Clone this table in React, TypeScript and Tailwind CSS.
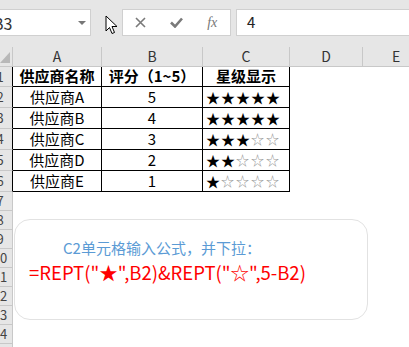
import React from "react";

type Row = { no: number; name: string; score: string; stars: string };

const rows: Row[] = [
  { no: 2, name: "供应商A", score: "5", stars: "★★★★★" },
  { no: 3, name: "供应商B", score: "4", stars: "★★★★★" },
  { no: 4, name: "供应商C", score: "3", stars: "★★★☆☆" },
  { no: 5, name: "供应商D", score: "2", stars: "★★☆☆☆" },
  { no: 6, name: "供应商E", score: "1", stars: "★☆☆☆☆" },
];

const emptyRows = [7, 8, 9, 10, 11, 12, 13, 14, 15];

function RowHead({ n, dark }: { n: number; dark?: boolean }) {
  return (
    <div
      className={
        "w-[13px] shrink-0 overflow-hidden bg-[#e6e6e6] border-b border-b-[#c8c8c8] border-r " +
        (dark ? "border-r-black" : "border-r-[#c8c8c8]")
      }
    >
      <div className="ml-[-13px] w-[26px] h-full flex items-center justify-center text-[13px] text-[#444]">
        {n}
      </div>
    </div>
  );
}

function Stars({ value }: { value: string }) {
  return (
    <div className="flex pl-[3px] gap-[3px]">
      {value.split("").map((s, i) => (
        <span
          key={i}
          className={
            "w-[12px] text-center leading-none " +
            (s === "★" ? "text-[14px] text-black" : "text-[13px] text-[#9a9a9a]")
          }
        >
          {s}
        </span>
      ))}
    </div>
  );
}

export default function App() {
  return (
    <div className="relative w-[409px] h-[347px] overflow-hidden bg-white font-['Noto_Sans_CJK_SC','Microsoft_YaHei',sans-serif] text-black">
      {/* formula bar */}
      <div className="h-[47px] bg-[#e6e6e6] flex items-start pt-[9px]">
        <div className="w-[91px] h-[27px] bg-white border border-[#d0d0d0] border-l-0 flex items-center overflow-hidden relative">
          <span className="ml-[-7px] text-[16px] text-[#333]">B3</span>
          <svg className="absolute left-[78px] top-[11px]" width="8" height="5" viewBox="0 0 8 5">
            <polygon points="0,0 8,0 4,4" fill="#777" />
          </svg>
        </div>
        <div className="w-[31px] flex justify-start pl-[14px] pt-[6px]">
          <svg width="13" height="20" viewBox="0 0 13 20">
            <path
              d="M1 1 L1 16 L4.5 12.5 L7 18.5 L9.5 17.5 L7 11.5 L12 11.5 Z"
              fill="white"
              stroke="black"
              strokeWidth="1"
              strokeLinejoin="round"
            />
          </svg>
        </div>
        <div className="w-[109px] h-[27px] bg-white border border-[#d0d0d0] flex items-center">
          <div className="w-[36px] flex justify-center">
            <svg width="11" height="11" viewBox="0 0 11 11">
              <path d="M1 1 L10 10 M10 1 L1 10" stroke="#7a7a7a" strokeWidth="1.6" />
            </svg>
          </div>
          <div className="w-[36px] flex justify-center">
            <svg width="13" height="11" viewBox="0 0 13 11">
              <path d="M1 5.5 L5 9.5 L12 1.5" stroke="#7a7a7a" strokeWidth="2.6" fill="none" />
            </svg>
          </div>
          <div className="w-[36px] flex justify-center">
            <span className="font-['Liberation_Serif',serif] italic text-[14px] text-[#777] leading-none">
              fx
            </span>
          </div>
        </div>
        <div className="ml-[5px] flex-1 h-[27px] bg-white border border-r-0 border-[#d0d0d0] flex items-center pl-[10px]">
          <span className="text-[15px] text-[#222]">4</span>
        </div>
      </div>

      {/* column headers */}
      <div className="flex h-[20px] bg-[#e6e6e6] border-b border-[#c8c8c8] text-[14px] text-[#333]">
        <div className="w-[13px] shrink-0 border-r border-[#c8c8c8] flex items-end">
          <svg width="12" height="19" viewBox="0 0 12 19">
            <polygon points="10,5 10,16 0,16" fill="#b8b8b8" />
          </svg>
        </div>
        <div className="w-[89px] shrink-0 border-r border-[#c8c8c8] flex items-center justify-center">A</div>
        <div className="w-[101px] shrink-0 border-r border-[#c8c8c8] flex items-center justify-center">B</div>
        <div className="w-[87px] shrink-0 border-r border-[#c8c8c8] flex items-center justify-center">C</div>
        <div className="w-[73px] shrink-0 border-r border-[#c8c8c8] flex items-center justify-center">D</div>
        <div className="w-[66px] shrink-0 flex items-center justify-center">E</div>
      </div>

      {/* header row */}
      <div className="flex h-[20px]">
        <RowHead n={1} dark />
        <div className="w-[89px] shrink-0 border-r border-b border-black flex items-center justify-center text-[15px] font-bold">
          供应商名称
        </div>
        <div className="w-[101px] shrink-0 border-r border-b border-black flex items-center justify-center text-[15px] font-bold">
          评分（1~5）
        </div>
        <div className="w-[87px] shrink-0 border-r border-b border-black flex items-center justify-center text-[15px] font-bold">
          星级显示
        </div>
      </div>

      {rows.map((r) => (
        <div key={r.no} className="flex h-[21px]">
          <RowHead n={r.no} dark />
          <div className="w-[89px] shrink-0 border-r border-b border-black flex items-center justify-center text-[15px]">
            {r.name}
          </div>
          <div className="w-[101px] shrink-0 border-r border-b border-black flex items-center justify-center text-[15px]">
            {r.score}
          </div>
          <div className="w-[87px] shrink-0 border-r border-b border-black flex items-center">
            <Stars value={r.stars} />
          </div>
        </div>
      ))}

      {emptyRows.map((n) => (
        <div key={n} className="flex h-[19px]">
          <RowHead n={n} />
        </div>
      ))}

      {/* floating text box */}
      <div className="absolute left-[14px] top-[219px] w-[354px] h-[101px] rounded-[16px] border border-[#e2e2e2] bg-white">
        <div className="pl-[48px] pt-[17px] text-[15px] leading-[22px] text-[#5b9bd5]">
          C2单元格输入公式，并下拉：
        </div>
        <div className="pl-[14px] pt-[1px] text-[18.5px] leading-[24px] text-[#ff0000]">
          =REPT("★",B2)&amp;REPT("☆",5-B2)
        </div>
      </div>
    </div>
  );
}
